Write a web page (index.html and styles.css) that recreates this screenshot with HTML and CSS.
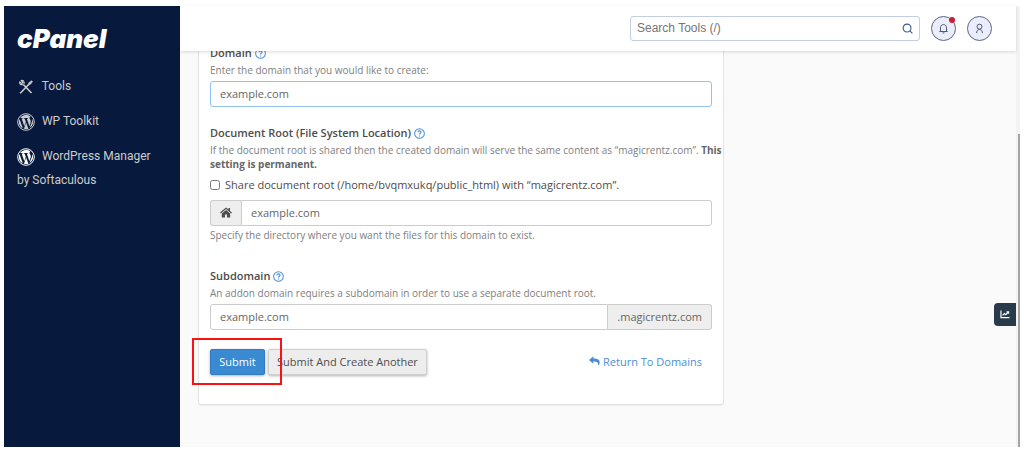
FILE: index.html
```html
<!DOCTYPE html>
<html lang="en">
<head>
  <meta charset="UTF-8">
  <title>cPanel - Domains</title>
  <link rel="stylesheet" href="styles.css">
</head>
<body>
  <svg class="symbols" aria-hidden="true">
    <symbol id="help" viewBox="0 0 12 12">
      <circle cx="6" cy="6" r="5.3" fill="none" stroke="currentColor" stroke-width="1.1"/>
      <path d="M4.3 4.7C4.4 2.6 7.8 2.7 7.7 4.7C7.6 5.8 6 5.8 6 7.1M6 8.1V9.2" fill="none" stroke="currentColor" stroke-width="1.2"/>
    </symbol>
    <symbol id="wordpress" viewBox="0 0 18 18">
      <circle cx="9" cy="9" r="8.3" fill="none" stroke="currentColor" stroke-width="1"/>
      <path fill="currentColor" d="M1.9 9a7.1 7.1 0 0 0 4 6.4L2.5 6.1A7.1 7.1 0 0 0 1.9 9zM13.8 8.6c0-.9-.3-1.5-.6-2-.4-.6-.7-1.1-.7-1.7 0-.7.5-1.3 1.2-1.3A7.1 7.1 0 0 0 3.1 5.1h.5c.7 0 1.9-.1 1.9-.1.4 0 .4.5 0 .6l-.8.1 2.6 7.6 1.5-4.6-1.1-3-.7-.1c-.4 0-.3-.6 0-.6 0 0 1.1.1 1.8.1.7 0 1.9-.1 1.9-.1.4 0 .4.5 0 .6l-.8.1 2.5 7.5.7-2.3c.4-1 .7-1.7.7-2.3zM9.1 9.6 7 15.8a7.1 7.1 0 0 0 4.4-.1zM15.2 5.6c.3 1.5 0 2.7-.6 4.1l-2.1 5.4a7.1 7.1 0 0 0 2.7-9.5z"/>
    </symbol>
  </svg>

  <div class="app">
    <aside class="sidebar">
      <a href="#" class="logo">cPanel</a>
      <nav>
        <a href="#" class="nav-item">
          <svg class="nav-icon" viewBox="0 0 18 18" fill="none" stroke="currentColor">
            <path d="M6.3 6.5 14.5 15" stroke-width="1.6"/>
            <path d="M2.6 3.6 4.8 5.6 5.9 4.7 4.3 2.5C6.4 2 7.7 3.8 7 5.9M2.6 3.6C2.1 5.9 4 7.3 6.2 6.6" stroke-width="1.1"/>
            <path d="M3.2 15.2 11.5 6.7" stroke-width="1.6"/>
            <path d="M11 6.8 12 4.6 14.7 2.7 15.5 3.5 13.5 6.2 11.5 7.2z" fill="currentColor" stroke-width=".6"/>
          </svg>
          Tools
        </a>
        <a href="#" class="nav-item">
          <svg class="nav-icon"><use href="#wordpress"/></svg>
          WP Toolkit
        </a>
        <a href="#" class="nav-item">
          <svg class="nav-icon bright"><use href="#wordpress"/></svg>
          WordPress Manager by Softaculous
        </a>
      </nav>
    </aside>

    <div class="page">
      <header class="topbar">
        <div class="search">
          <input type="text" placeholder="Search Tools (/)" aria-label="Search Tools">
          <button type="button" aria-label="Search">
            <svg viewBox="0 0 12 12" fill="none" stroke="currentColor" stroke-width="1.2">
              <circle cx="5.5" cy="5.5" r="4.3"/>
              <path d="M8.6 8.6 11.3 11.3"/>
            </svg>
          </button>
        </div>
        <button type="button" class="round" aria-label="Notifications">
          <svg viewBox="0 0 12 12" fill="none" stroke="currentColor" stroke-width="1">
            <path d="M1.5 9.3H10.5M2.7 9.2V5.2C2.7 .5 9.3 .5 9.3 5.2V9.2M5 10.8H7"/>
          </svg>
          <span class="dot"></span>
        </button>
        <button type="button" class="round" aria-label="Account">
          <svg viewBox="0 0 12 12" fill="none" stroke="currentColor" stroke-width="1">
            <circle cx="6" cy="4" r="2.7"/>
            <path d="M2.8 11C2.9 5.7 9.1 5.7 9.2 11"/>
          </svg>
        </button>
      </header>

      <main class="content">
        <form class="card">
          <div class="field">
            <div class="field-title">
              <label for="domain">Domain</label>
              <svg class="help-icon"><use href="#help"/></svg>
            </div>
            <p class="help-text">Enter the domain that you would like to create:</p>
            <input type="text" id="domain" class="text-input focused" value="example.com">
          </div>

          <div class="field root-field">
            <div class="field-title">
              <label for="docroot">Document Root (File System Location)</label>
              <svg class="help-icon"><use href="#help"/></svg>
            </div>
            <p class="help-text">If the document root is shared then the created domain will serve the same content as “magicrentz.com”. <strong>This setting is permanent.</strong></p>
            <label class="check">
              <input type="checkbox">
              Share document root (/home/bvqmxukq/public_html) with “magicrentz.com”.
            </label>
            <div class="input-group">
              <span class="addon home">
                <svg viewBox="0 0 12 11" fill="currentColor">
                  <path d="M6 .4 0 5.6l.8.8L6 2.1l5.2 4.3.8-.8-2-1.7V1H8.5v1.6z"/>
                  <path d="M6 3.1 1.8 6.6V10.6H5V7.4H7V10.6H10.2V6.6z"/>
                </svg>
              </span>
              <input type="text" id="docroot" class="text-input" value="example.com">
            </div>
            <p class="help-text">Specify the directory where you want the files for this domain to exist.</p>
          </div>

          <div class="field">
            <div class="field-title">
              <label for="subdomain">Subdomain</label>
              <svg class="help-icon"><use href="#help"/></svg>
            </div>
            <p class="help-text">An addon domain requires a subdomain in order to use a separate document root.</p>
            <div class="input-group">
              <input type="text" id="subdomain" class="text-input" value="example.com">
              <span class="addon">.magicrentz.com</span>
            </div>
          </div>

          <div class="actions">
            <div class="marked">
              <button type="button" class="btn primary">Submit</button>
            </div>
            <button type="button" class="btn">Submit And Create Another</button>
            <a href="#" class="return">
              <svg viewBox="0 0 11 10" fill="currentColor">
                <path d="M0 4 4.3 .3V2.5C8.5 2.5 10.8 3.7 10.7 6.5 10.6 8 9.9 9 8.9 9.7 9.5 6.5 8 5.6 4.3 5.6V7.7z"/>
              </svg>
              Return To Domains
            </a>
          </div>
        </form>
      </main>

      <button type="button" class="stats" aria-label="Statistics">
        <svg viewBox="0 0 11 10" fill="none" stroke="currentColor">
          <path d="M1 .5V8.5H10.5" stroke-width="1.3"/>
          <path d="M2.8 6 4.8 3.9 6.3 5.2 9 2.5M7.2 2H9.5V4.3" stroke-width="1.3"/>
        </svg>
      </button>
    </div>

    <div class="scroll-track"><div class="scroll-thumb"></div></div>
  </div>
</body>
</html>
```
FILE: styles.css
```css
* {
  box-sizing: border-box;
}
body {
  margin: 0;
  padding: 6px 4px;
  background: #fff;
  color: #4d4d4d;
  font-family: "Open Sans", sans-serif;
  font-size: 11px;
}
input,
button {
  font: inherit;
  color: inherit;
}
a {
  text-decoration: none;
}
p {
  margin: 0;
}
.symbols {
  display: none;
}
.app {
  display: flex;
  min-height: calc(100vh - 12px);
}

/* sidebar */
.sidebar {
  width: 176px;
  flex-shrink: 0;
  padding: 17px 24px 17px 13px;
  background: #071a3d;
}
.logo {
  display: block;
  margin-bottom: 19px;
  color: #fff;
  font-family: Inter, sans-serif;
  font-size: 26px;
  font-style: italic;
  font-weight: 900;
  line-height: 32px;
}
.nav-item {
  display: block;
  margin-bottom: 11px;
  color: #ccc;
  font-family: Roboto, sans-serif;
  font-size: 12px;
  line-height: 24px;
}
.nav-icon {
  width: 18px;
  height: 18px;
  margin-right: 4px;
  vertical-align: middle;
}
.nav-icon.bright {
  color: #fff;
}

/* top bar */
.page {
  position: relative;
  flex: 1;
  display: flex;
  flex-direction: column;
  background: #fafafa;
}
.topbar {
  z-index: 1;
  display: flex;
  align-items: center;
  justify-content: flex-end;
  gap: 11px;
  height: 45px;
  padding: 0 24px;
  background: #fff;
  box-shadow: 0 1px 3px rgba(0, 0, 0, 0.15);
}
.search {
  display: flex;
  width: 290px;
  height: 25px;
  border: 1px solid #c4cede;
  border-radius: 3px;
}
.search input {
  flex: 1;
  min-width: 0;
  padding: 0 6px 2px;
  border: 0;
  background: none;
  font-family: "Liberation Sans", sans-serif;
  font-size: 12px;
}
.search input::placeholder {
  color: #757575;
}
.search button {
  display: flex;
  align-items: center;
  padding: 0 6px;
  border: 0;
  background: none;
  color: #3a5a94;
}
.search svg {
  width: 11px;
  height: 11px;
}
.round {
  position: relative;
  display: flex;
  align-items: center;
  justify-content: center;
  width: 25px;
  height: 25px;
  padding: 0;
  border: 1px solid #5a6684;
  border-radius: 50%;
  background: #ebedfb;
  color: #3d4a6e;
}
.round svg {
  width: 11px;
  height: 11px;
}
.dot {
  position: absolute;
  top: 0;
  right: 0;
  width: 6px;
  height: 6px;
  border-radius: 50%;
  background: #d01c2e;
}

/* form */
.content {
  flex: 1;
  padding: 0 18px;
  overflow: hidden;
}
.card {
  max-width: 526px;
  margin-top: -19px;
  padding: 11px 11px 29px;
  border: 1px solid #e2e2e2;
  border-radius: 3px;
  background: #fff;
  box-shadow: 0 1px 1px rgba(0, 0, 0, 0.05);
}
.field {
  margin-bottom: 17px;
}
.root-field {
  margin-bottom: 25px;
}
.field-title {
  display: flex;
  align-items: center;
  gap: 3px;
  margin-bottom: 1px;
  font-weight: 600;
  line-height: 18px;
}
.help-icon {
  width: 11px;
  height: 11px;
  color: #4a90d9;
}
.help-text {
  margin-right: -10px;
  color: #808080;
  font-size: 10px;
  line-height: 14px;
}
.help-text strong {
  color: #666;
}
.text-input {
  display: block;
  width: 100%;
  height: 26px;
  margin-top: 4px;
  padding: 0 9px 2px;
  border: 1px solid #ccc;
  border-radius: 3px;
  background: #fff;
  color: #666;
}
.text-input.focused {
  border-color: #8fc3f5;
}
.check {
  display: flex;
  align-items: center;
  gap: 5px;
  margin: 5px 0 6px;
  line-height: 18px;
}
.check input {
  width: 10px;
  height: 10px;
  margin: 0;
}
.input-group {
  display: flex;
  margin: 4px 0 2px;
}
.input-group .text-input {
  flex: 1;
  min-width: 0;
  margin: 0;
}
.input-group .text-input:first-child {
  border-radius: 3px 0 0 3px;
}
.input-group .text-input:last-child {
  border-radius: 0 3px 3px 0;
}
.addon {
  display: flex;
  align-items: center;
  padding: 0 9px 2px;
  border: 1px solid #ccc;
  border-left: 0;
  border-radius: 0 3px 3px 0;
  background: #eee;
  color: #666;
}
.addon.home {
  border-left: 1px solid #ccc;
  border-right: 0;
  border-radius: 3px 0 0 3px;
  color: #4d4d4d;
}
.addon svg {
  width: 12px;
  height: 11px;
}

/* buttons */
.actions {
  display: flex;
  align-items: center;
  gap: 3px;
  margin-top: 19px;
}
.btn {
  min-width: 55px;
  height: 26px;
  padding: 0 8px 2px;
  border: 1px solid #d0d0d0;
  border-radius: 2px;
  background: #ededed;
  box-shadow: 0 1px 3px rgba(0, 0, 0, 0.3);
}
.btn.primary {
  border-color: #2f7cc4;
  background: #3a8ad2;
  color: #fff;
}
.marked {
  position: relative;
}
.marked::after {
  content: "";
  position: absolute;
  inset: -11px -17px -10px -18px;
  border: 2px solid #fb1111;
  pointer-events: none;
  z-index: 1;
}
.return {
  display: flex;
  align-items: center;
  gap: 3px;
  margin-left: auto;
  margin-right: 10px;
  padding-bottom: 2px;
  color: #4a8fd3;
}
.return svg {
  width: 11px;
  height: 10px;
}

.stats {
  position: absolute;
  top: 297px;
  right: 0;
  display: flex;
  align-items: center;
  justify-content: center;
  width: 22px;
  height: 23px;
  padding: 0;
  border: 0;
  border-radius: 4px 0 0 4px;
  background: #293a4a;
  color: #fff;
}
.stats svg {
  width: 10px;
  height: 9px;
}
.scroll-track {
  display: flex;
  flex-direction: column;
  justify-content: flex-end;
  width: 4px;
  background: #f3f3f3;
}
.scroll-thumb {
  width: 2px;
  height: 71%;
  margin-left: auto;
  background: #a3a3a3;
}
```
